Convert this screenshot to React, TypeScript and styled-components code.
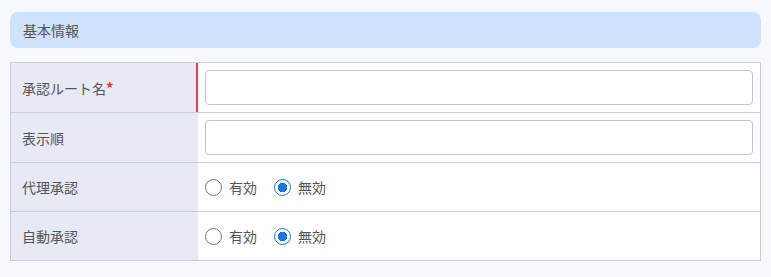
import styled, { createGlobalStyle } from "styled-components";

const GlobalStyle = createGlobalStyle`
  body {
    margin: 0;
    background: #f8f8ff;
    font-family: "Noto Sans CJK JP", "Noto Sans", sans-serif;
    color: #555;
  }
`;

const Page = styled.div`
  padding: 12px 10px 16px 10px;
`;

const SectionHeader = styled.div`
  height: 36px;
  display: flex;
  align-items: center;
  padding-left: 13px;
  background: #cfe2fd;
  border-radius: 8px;
  font-size: 14px;
  color: #555;
`;

const Table = styled.div`
  margin-top: 14px;
  border: 1px solid #c8cbe8;
  background: #fff;
`;

const Row = styled.div`
  display: grid;
  grid-template-columns: 187px 1fr;
  border-bottom: 1px solid #c8cbe8;
  &:last-child {
    border-bottom: none;
  }
`;

const Label = styled.div<{ $required?: boolean }>`
  display: flex;
  align-items: center;
  padding-left: 11px;
  background: #e7e9f5;
  font-size: 14px;
  color: #555;
  border-right: 2px solid ${(p) => (p.$required ? "#f0383e" : "transparent")};
`;

const Star = styled.span`
  color: #f0383e;
  font-size: 15px;
  font-weight: 700;
  line-height: 1;
`;

const Cell = styled.div<{ $tall?: boolean }>`
  display: flex;
  align-items: center;
  padding: 0 7px;
  min-height: ${(p) => (p.$tall ? "49px" : "48px")};
`;

const TextInput = styled.input`
  width: 100%;
  height: 35px;
  box-sizing: border-box;
  border: 1px solid #c4c4c4;
  border-radius: 4px;
  background: #fff;
  font-size: 14px;
  font-family: inherit;
  outline: none;
`;

const RadioGroup = styled.div`
  display: flex;
  align-items: center;
  gap: 17px;
`;

const Option = styled.label`
  display: flex;
  align-items: center;
  gap: 7px;
  font-size: 14px;
  color: #555;
`;

const Radio = styled.input.attrs({ type: "radio" })`
  appearance: none;
  margin: 0;
  width: 17px;
  height: 17px;
  border-radius: 50%;
  border: 1px solid #767676;
  background: #fff;
  box-sizing: border-box;
  &:checked {
    border-color: #1a73e8;
    background: radial-gradient(circle, #1a73e8 0 4.5px, #fff 5px);
  }
`;

const fields = [
  { label: "代理承認", name: "proxy" },
  { label: "自動承認", name: "auto" },
];

export default function App() {
  return (
    <Page>
      <GlobalStyle />
      <SectionHeader>基本情報</SectionHeader>
      <Table>
        <Row>
          <Label $required>
            承認ルート名<Star>*</Star>
          </Label>
          <Cell $tall>
            <TextInput type="text" />
          </Cell>
        </Row>
        <Row>
          <Label>表示順</Label>
          <Cell $tall>
            <TextInput type="text" />
          </Cell>
        </Row>
        {fields.map((f) => (
          <Row key={f.name}>
            <Label>{f.label}</Label>
            <Cell>
              <RadioGroup>
                <Option>
                  <Radio name={f.name} />
                  有効
                </Option>
                <Option>
                  <Radio name={f.name} defaultChecked />
                  無効
                </Option>
              </RadioGroup>
            </Cell>
          </Row>
        ))}
      </Table>
    </Page>
  );
}
